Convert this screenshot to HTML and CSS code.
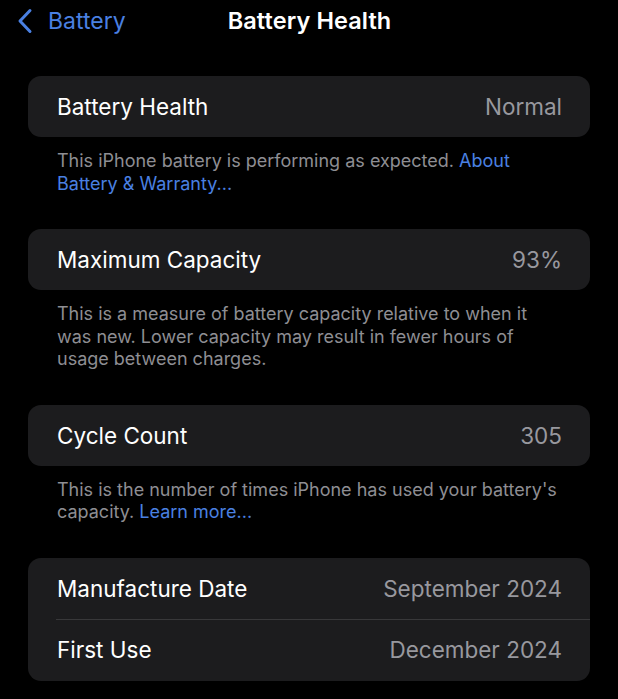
FILE: index.html
```html
<!DOCTYPE html>
<html>
<head>
<meta charset="utf-8">
<link rel="stylesheet" href="styles.css">
</head>
<body>
<div class="screen">
  <header class="nav">
    <a class="back">
      <svg class="chev" width="16" height="26" viewBox="0 0 16 26"><path d="M13 2.5 L3 13 L13 23.5" fill="none" stroke="#4a80e2" stroke-width="3" stroke-linecap="round" stroke-linejoin="round"/></svg>
      <span>Battery</span>
    </a>
    <div class="title">Battery Health</div>
  </header>
  <main class="content">
    <section class="group">
      <div class="card">
        <div class="row"><span class="label">Battery Health</span><span class="value">Normal</span></div>
      </div>
      <p class="foot">This iPhone battery is performing as expected. <span class="link">About Battery &amp; Warranty...</span></p>
    </section>
    <section class="group">
      <div class="card">
        <div class="row"><span class="label">Maximum Capacity</span><span class="value">93%</span></div>
      </div>
      <p class="foot">This is a measure of battery capacity relative to when it was new. Lower capacity may result in fewer hours of usage between charges.</p>
    </section>
    <section class="group">
      <div class="card">
        <div class="row"><span class="label">Cycle Count</span><span class="value">305</span></div>
      </div>
      <p class="foot">This is the number of times iPhone has used your battery's capacity. <span class="link">Learn more...</span></p>
    </section>
    <section class="group">
      <div class="card">
        <div class="row"><span class="label">Manufacture Date</span><span class="value">September 2024</span></div>
        <div class="row divided"><span class="label">First Use</span><span class="value">December 2024</span></div>
      </div>
    </section>
  </main>
</div>
</body>
</html>
```
FILE: styles.css
```css
* { box-sizing: border-box; }
html, body { margin: 0; padding: 0; background: #000; }
body {
  font-family: Inter, "Noto Sans", sans-serif;
  color: #fff;
  width: 618px;
  height: 699px;
  overflow: hidden;
}
.nav {
  position: relative;
  height: 40px;
  display: flex;
  align-items: center;
  justify-content: center;
}
.back {
  position: absolute;
  left: 17px;
  top: 7px;
  display: flex;
  align-items: center;
  gap: 15px;
  color: #4a80e2;
  font-size: 23px;
  letter-spacing: 0;
}
.chev { display: block; }
.title {
  font-size: 23.5px;
  font-weight: 600;
  letter-spacing: 0.1px;
  margin-left: 1px;
}
.content {
  padding: 36px 28px 0 28px;
  display: flex;
  flex-direction: column;
  gap: 34px;
}
.card {
  background: #1c1c1e;
  border-radius: 13px;
  overflow: hidden;
}
.row {
  height: 61px;
  display: flex;
  align-items: center;
  justify-content: space-between;
  padding: 0 28px 0 29px;
  font-size: 22.5px;
  letter-spacing: 0;
  position: relative;
}
.divided::before {
  content: "";
  position: absolute;
  left: 28px;
  right: 0;
  top: 0;
  height: 1px;
  background: #38383a;
}
.divided { height: 62px; }
.label { color: #fff; }
.value { color: #98989e; }
.foot {
  margin: 13px 0 0 0;
  padding: 0 31px 0 29px;
  font-size: 18px;
  line-height: 22.5px;
  color: #8e8e93;
  letter-spacing: 0;
}
.link { color: #4a80e2; }
```
